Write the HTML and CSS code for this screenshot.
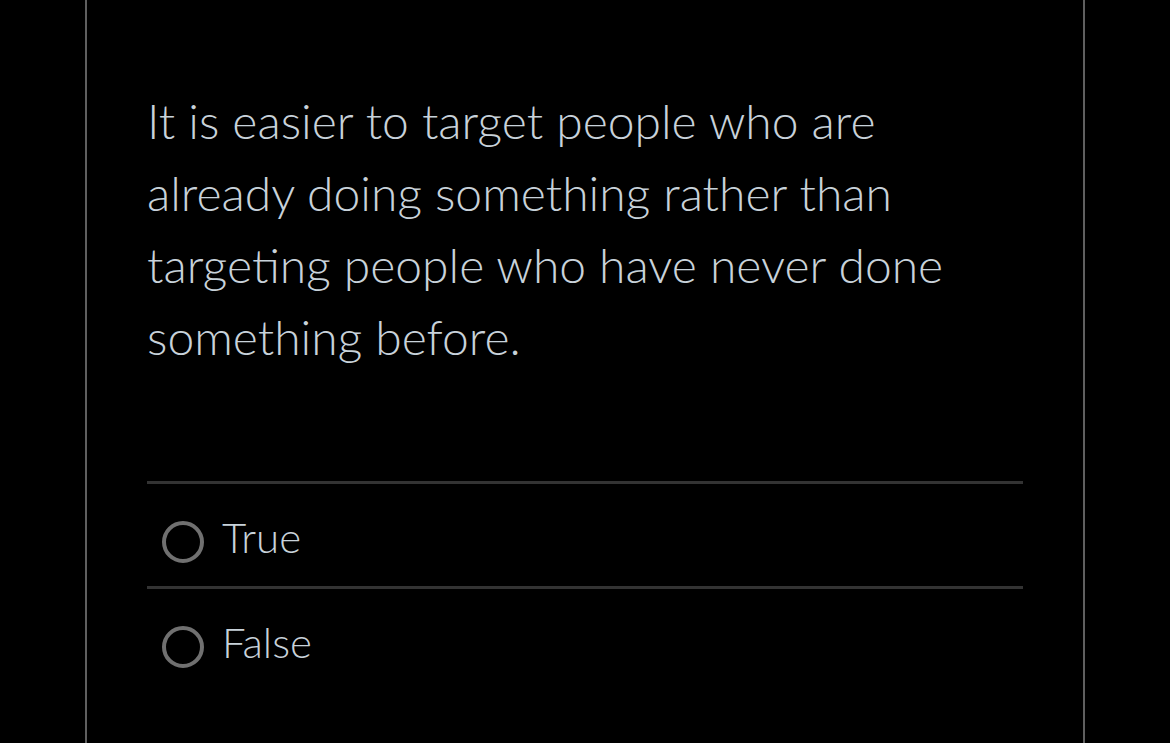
FILE: index.html
```html
<!DOCTYPE html>
<html lang="en">
<head>
<meta charset="utf-8">
<link rel="stylesheet" href="styles.css">
</head>
<body>
<div class="page">
  <div class="card">
    <p class="question">It is easier to target people who are already doing something rather than targeting people who have never done something before.</p>
    <div class="answers">
      <label class="answer"><span class="radio"></span><span class="label">True</span></label>
      <label class="answer"><span class="radio"></span><span class="label">False</span></label>
    </div>
  </div>
</div>
</body>
</html>
```
FILE: styles.css
```css
html, body {
  margin: 0;
  padding: 0;
  background: #000;
  height: 100%;
  overflow: hidden;
}
.page {
  height: 743px;
  display: flex;
}
.card {
  margin-left: 85px;
  width: 1000px;
  height: 743px;
  border-left: 2px solid #5f5f5f;
  border-right: 2px solid #5f5f5f;
  padding: 85px 60px 0 60px;
  box-sizing: border-box;
  font-family: "Lato", "Liberation Sans", sans-serif;
  font-weight: 300;
  color: #c8d2da;
}
.question {
  margin: 0;
  font-size: 48px;
  line-height: 72px;
}
.answers {
  margin-top: 108px;
  border-top: 3px solid #333;
}
.answer {
  display: flex;
  align-items: center;
  height: 102px;
  border-bottom: 3px solid #333;
  padding-left: 15px;
}
.answer:last-child {
  border-bottom: none;
}
.radio {
  width: 34px;
  height: 34px;
  border: 4px solid #707070;
  border-radius: 50%;
  flex: none;
  position: relative;
  top: 7px;
}
.label {
  margin-left: 18px;
  font-size: 42px;
  line-height: 1;
  position: relative;
  top: 2px;
}
```
